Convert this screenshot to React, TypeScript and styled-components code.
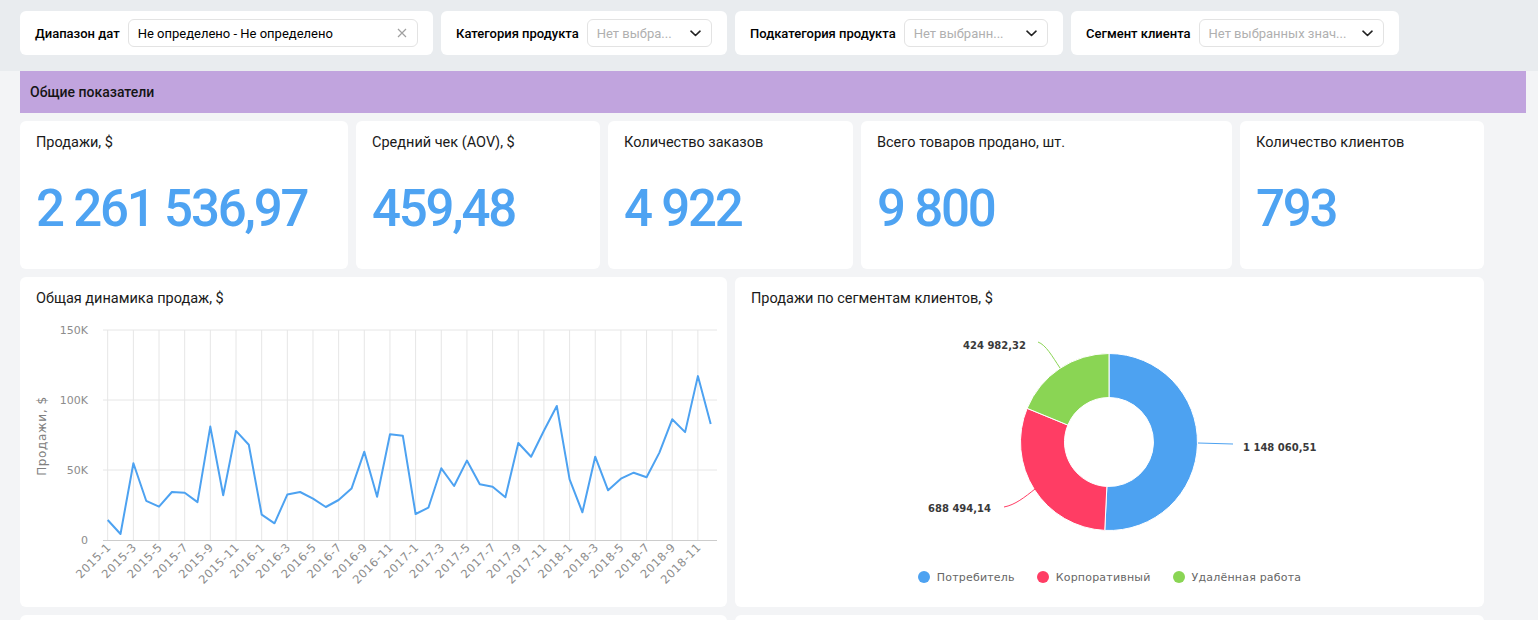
import React from 'react';
import styled, { createGlobalStyle } from 'styled-components';

const GlobalStyle = createGlobalStyle`
  html, body { margin: 0; padding: 0; background: #f3f4f6; }
  body { font-family: Roboto, "Noto Sans", sans-serif; color: #000; overflow: hidden; }
  * { box-sizing: border-box; }
`;

const Page = styled.div`
  width: 1538px;
`;

const FilterBar = styled.div`
  display: flex;
  align-items: flex-start;
  gap: 8px;
  height: 71px;
  padding: 11px 20px 0;
  background: #e9ecef;
`;

const FilterCard = styled.div<{ $w: number }>`
  width: ${p => p.$w}px;
  height: 44px;
  background: #fff;
  border-radius: 6px;
  display: flex;
  align-items: center;
  gap: 8px;
  padding: 0 15px;
`;

const FilterLabel = styled.span`
  font-size: 13px;
  font-weight: 500;
  white-space: nowrap;
  color: #000;
`;

const Control = styled.div<{ $placeholder?: boolean }>`
  flex: 1;
  min-width: 0;
  height: 28px;
  border: 1px solid #e3e3e3;
  border-radius: 6px;
  display: flex;
  align-items: center;
  justify-content: space-between;
  gap: 8px;
  padding: 0 10px 0 9px;
  font-size: 13px;
  color: ${p => (p.$placeholder ? '#b0b0b0' : '#000')};
`;

const ControlText = styled.span`
  white-space: nowrap;
  overflow: hidden;
`;

const Main = styled.div`
  padding: 0 12px 0 20px;
`;

const SectionHeader = styled.div`
  height: 42px;
  background: #c1a4de;
  display: flex;
  align-items: center;
  padding: 0 10px;
  font-size: 14px;
  font-weight: 500;
  color: #151515;
`;

const Row = styled.div<{ $h: number }>`
  display: flex;
  gap: 8px;
  margin-top: 8px;
  height: ${p => p.$h}px;
`;

const KpiCard = styled.div<{ $w: number }>`
  width: ${p => p.$w}px;
  background: #fff;
  border-radius: 6px;
  padding: 12px 16px 6px;
  display: flex;
  flex-direction: column;
`;

const CardTitle = styled.div`
  font-size: 14.5px;
  line-height: 20px;
  color: #1a1a1a;
  white-space: nowrap;
`;

const KpiValue = styled.div`
  flex: 1;
  display: flex;
  align-items: center;
  font-size: 51px;
  font-weight: 500;
  letter-spacing: -2.2px;
  color: #4ea3f2;
  line-height: 1;
`;

const ChartCard = styled.div<{ $w: number }>`
  width: ${p => p.$w}px;
  background: #fff;
  border-radius: 6px;
  display: flex;
  flex-direction: column;
  overflow: hidden;
`;

const ChartTitle = styled(CardTitle)`
  padding: 12px 16px 0;
`;

const ChartSvg = styled.svg`
  display: block;
  font-family: "DejaVu Sans", Verdana, sans-serif;
`;

const Legend = styled.div`
  display: flex;
  justify-content: center;
  align-items: center;
  gap: 22px;
  height: 20px;
  margin-top: 8px;
  font-family: "DejaVu Sans", Verdana, sans-serif;
  font-size: 11px;
  letter-spacing: 0.2px;
  color: #666;
`;

const LegendItem = styled.div`
  display: flex;
  align-items: center;
  gap: 7px;
`;

const Dot = styled.span<{ $c: string }>`
  width: 12px;
  height: 12px;
  border-radius: 50%;
  background: ${p => p.$c};
`;

const ClearIcon = () => (
  <svg width="10" height="10" viewBox="0 0 10 10">
    <path d="M1 1L9 9M9 1L1 9" stroke="#a0a0a0" strokeWidth="1.2" fill="none" />
  </svg>
);

const Chevron = () => (
  <svg width="11" height="7" viewBox="0 0 11 7" style={{ flexShrink: 0 }}>
    <path d="M1 1.2L5.5 5.5L10 1.2" stroke="#222" strokeWidth="1.6" fill="none" strokeLinecap="round" strokeLinejoin="round" />
  </svg>
);

const sales = [
  14.3, 4.3, 54.8, 28, 23.8, 34.3, 33.8, 27.1, 81, 31.9, 77.9, 68.1,
  18.1, 11.9, 32.4, 34.3, 29.5, 23.6, 28.6, 36.7, 63.1, 30.9, 75.5, 74.5,
  18.6, 23.1, 51.2, 38.6, 56.7, 39.8, 38.1, 30.5, 69.3, 59.5, 78.1, 95.7,
  43.3, 19.8, 59.5, 35.5, 43.8, 48.1, 44.8, 62.4, 86.2, 77.1, 117.1, 82.9,
];

const X0 = 107.7;
const STEP = 12.83;
const Y0 = 540;
const KPX = 1.4;

const LineChart = () => {
  const pts = sales.map((v, i) => `${(X0 + i * STEP).toFixed(1)},${(Y0 - v * KPX).toFixed(1)}`).join(' ');
  const ticks = Array.from({ length: 24 }, (_, i) => {
    const m = i * 2;
    const year = 2015 + Math.floor(m / 12);
    const month = (m % 12) + 1;
    return { x: X0 + m * STEP, label: `${year}-${month}` };
  });
  const grid = [
    { y: 330, label: '150K' },
    { y: 400, label: '100K' },
    { y: 470, label: '50K' },
  ];
  return (
    <ChartSvg width={707} height={298} viewBox="20 309 707 298">
      {grid.map(g => (
        <line key={g.y} x1={103} x2={717} y1={g.y} y2={g.y} stroke="#e6e6e6" strokeWidth={1} />
      ))}
      {ticks.map(t => (
        <line key={t.label} x1={t.x} x2={t.x} y1={330} y2={540} stroke="#e6e6e6" strokeWidth={1} />
      ))}
      <line x1={103} x2={717} y1={540.5} y2={540.5} stroke="#ccc" strokeWidth={1} />
      {[...grid, { y: 540, label: '0' }].map(g => (
        <text key={g.label} x={88} y={g.y + 4} textAnchor="end" fontSize={11} fill="#8c8c8c">
          {g.label}
        </text>
      ))}
      <text
        x={46}
        y={436}
        transform="rotate(-90 46 436)"
        textAnchor="middle"
        fontSize={12}
        letterSpacing={0.6}
        fill="#808080"
      >
        Продажи, $
      </text>
      {ticks.map(t => (
        <text
          key={t.label}
          x={t.x + 4}
          y={548}
          textAnchor="end"
          fontSize={11.5}
          letterSpacing={0.5}
          fill="#8c8c8c"
          transform={`rotate(-45 ${t.x + 4} 548)`}
        >
          {t.label}
        </text>
      ))}
      <polyline points={pts} fill="none" stroke="#4da2f1" strokeWidth={2} strokeLinejoin="round" />
    </ChartSvg>
  );
};

const CX = 1109;
const CY = 442;
const RO = 88.5;
const RI = 44.5;

const arcPath = (a0: number, a1: number) => {
  const p = (r: number, a: number) => `${(CX + r * Math.sin(a)).toFixed(2)} ${(CY - r * Math.cos(a)).toFixed(2)}`;
  const large = a1 - a0 > Math.PI ? 1 : 0;
  return `M${p(RO, a0)} A${RO} ${RO} 0 ${large} 1 ${p(RO, a1)} L${p(RI, a1)} A${RI} ${RI} 0 ${large} 0 ${p(RI, a0)} Z`;
};

const segments = [
  { v: 1148060.51, c: '#4da2f1', name: 'Потребитель' },
  { v: 688494.14, c: '#ff3d64', name: 'Корпоративный' },
  { v: 424982.32, c: '#8ad554', name: 'Удалённая работа' },
];

const DonutChart = () => {
  const total = segments.reduce((s, x) => s + x.v, 0);
  let acc = 0;
  const arcs = segments.map(s => {
    const a0 = (acc / total) * Math.PI * 2;
    acc += s.v;
    const a1 = (acc / total) * Math.PI * 2;
    return { ...s, d: arcPath(a0, a1) };
  });
  return (
    <ChartSvg width={749} height={250} viewBox="735 309 749 250">
      {arcs.map(a => (
        <path key={a.name} d={a.d} fill={a.c} stroke="#fff" strokeWidth={1} />
      ))}
      <path d="M1198 443 L1233 444" stroke="#4da2f1" strokeWidth={1} fill="none" />
      <path d="M1035 489 C1025 497 1015 505 1004 507" stroke="#ff3d64" strokeWidth={1} fill="none" />
      <path d="M1060 368 C1052 356 1046 345 1038 342" stroke="#8ad554" strokeWidth={1} fill="none" />
      <text x={1243} y={451} fontSize={10} fontWeight="bold" fill="#3a3a3a">1 148 060,51</text>
      <text x={991} y={512} fontSize={10} fontWeight="bold" fill="#3a3a3a" textAnchor="end">688 494,14</text>
      <text x={1026} y={349} fontSize={10} fontWeight="bold" fill="#3a3a3a" textAnchor="end">424 982,32</text>
    </ChartSvg>
  );
};

const kpis = [
  { w: 328, title: 'Продажи, $', value: '2 261 536,97' },
  { w: 244, title: 'Средний чек (AOV), $', value: '459,48' },
  { w: 245, title: 'Количество заказов', value: '4 922' },
  { w: 371, title: 'Всего товаров продано, шт.', value: '9 800' },
  { w: 244, title: 'Количество клиентов', value: '793' },
];

export default function App() {
  return (
    <Page>
      <GlobalStyle />
      <FilterBar>
        <FilterCard $w={413}>
          <FilterLabel>Диапазон дат</FilterLabel>
          <Control>
            <ControlText>Не определено - Не определено</ControlText>
            <ClearIcon />
          </Control>
        </FilterCard>
        <FilterCard $w={286}>
          <FilterLabel>Категория продукта</FilterLabel>
          <Control $placeholder>
            <ControlText>Нет выбра...</ControlText>
            <Chevron />
          </Control>
        </FilterCard>
        <FilterCard $w={328}>
          <FilterLabel>Подкатегория продукта</FilterLabel>
          <Control $placeholder>
            <ControlText>Нет выбранн...</ControlText>
            <Chevron />
          </Control>
        </FilterCard>
        <FilterCard $w={328}>
          <FilterLabel>Сегмент клиента</FilterLabel>
          <Control $placeholder>
            <ControlText>Нет выбранных знач...</ControlText>
            <Chevron />
          </Control>
        </FilterCard>
      </FilterBar>
      <Main>
        <SectionHeader>Общие показатели</SectionHeader>
        <Row $h={148}>
          {kpis.map(k => (
            <KpiCard key={k.title} $w={k.w}>
              <CardTitle>{k.title}</CardTitle>
              <KpiValue>{k.value}</KpiValue>
            </KpiCard>
          ))}
        </Row>
        <Row $h={330}>
          <ChartCard $w={707}>
            <ChartTitle>Общая динамика продаж, $</ChartTitle>
            <LineChart />
          </ChartCard>
          <ChartCard $w={749}>
            <ChartTitle>Продажи по сегментам клиентов, $</ChartTitle>
            <DonutChart />
            <Legend>
              {segments.map(s => (
                <LegendItem key={s.name}>
                  <Dot $c={s.c} />
                  {s.name}
                </LegendItem>
              ))}
            </Legend>
          </ChartCard>
        </Row>
        <Row $h={200}>
          <ChartCard $w={707} />
          <ChartCard $w={749} />
        </Row>
      </Main>
    </Page>
  );
}
